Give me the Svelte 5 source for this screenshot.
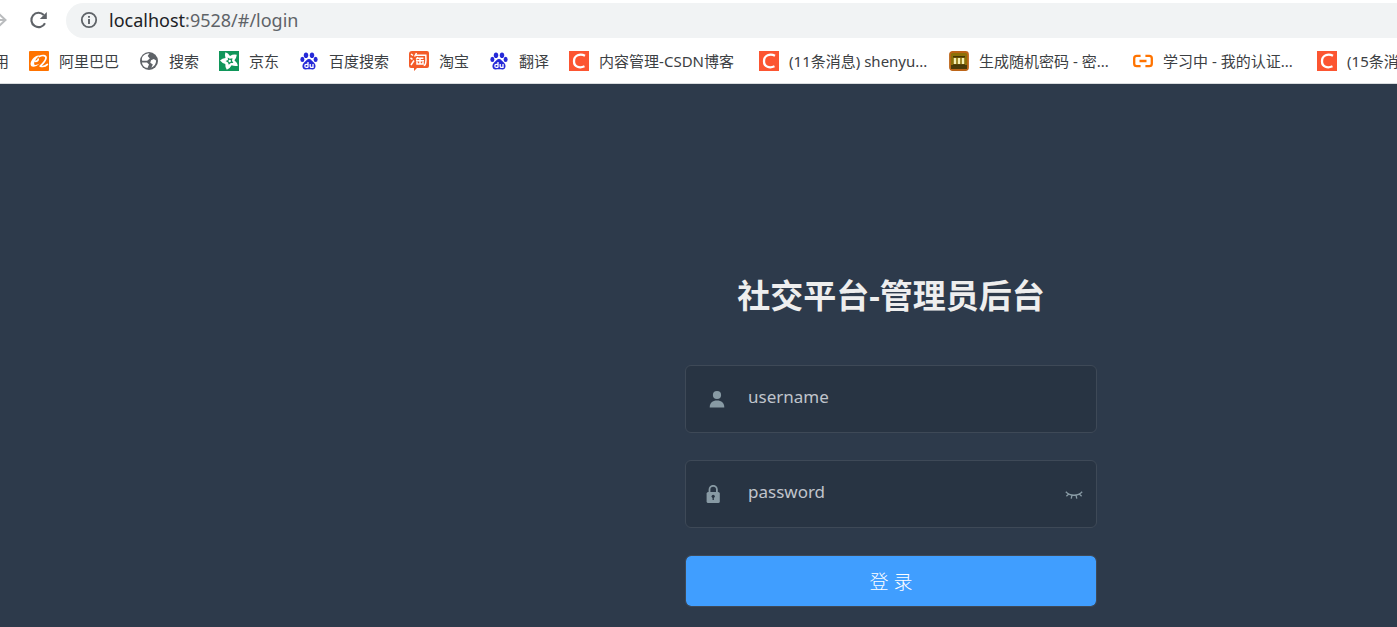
<script>
  const bookmarks = [
    { icon: 'ali', text: '阿里巴巴' },
    { icon: 'globe', text: '搜索' },
    { icon: 'jd', text: '京东' },
    { icon: 'paw', text: '百度搜索' },
    { icon: 'tao', text: '淘宝' },
    { icon: 'paw', text: '翻译' },
    { icon: 'csdn', text: '内容管理-CSDN博客', size: 'long' },
    { icon: 'csdn', text: '(11条消息) shenyu...', size: 'long' },
    { icon: 'key', text: '生成随机密码 - 密...', size: 'medium' },
    { icon: 'cloud', text: '学习中 - 我的认证...', size: 'medium' },
    { icon: 'csdn', text: '(15条消息)' }
  ];
  let address = 'localhost:9528/#/login';
  let username = '';
  let password = '';
  let visible = false;
</script>

<div class="browser">
  <header>
    <div class="toolbar">
      <button class="tool forward" aria-label="Forward">
        <svg viewBox="0 0 20 20"><path d="M1 10H16M9 4L15.5 10L9 16" fill="none" stroke="#babcbe" stroke-width="2" /></svg>
      </button>
      <button class="tool" aria-label="Reload">
        <svg viewBox="0 0 20 20"><path d="M17 13.2A7.2 7.2 0 1 1 15.8 5" fill="none" stroke="#5f6368" stroke-width="2.1" /><path d="M18.8 2V9H11.8Z" fill="#5f6368" /></svg>
      </button>
      <div class="address">
        <svg viewBox="0 0 18 18" aria-hidden="true"><circle cx="9" cy="9" r="7.2" fill="none" stroke="#5f6368" stroke-width="1.8" /><path d="M9 8V13M9 5V6.8" stroke="#5f6368" stroke-width="1.9" /></svg>
        <a href="#/login"><b>{address.slice(0, 9)}</b>{address.slice(9)}</a>
      </div>
    </div>
    <nav class="bookmarks" aria-label="Bookmarks">
      <a href="#apps" class="apps">应用</a>
      {#each bookmarks as item}
        <a href="#bookmark">
          <svg viewBox="0 0 20 20" aria-hidden="true">
            {#if item.icon === 'ali'}
              <rect width="20" height="20" rx="1" fill="#ff7300" />
              <path d="M10.6 4.6C6.5 3.2 1 9.5 1.6 13.6C2 17 7 16.4 11 12.2C8.6 13.8 5.4 14.8 5.2 13C5 11 7 7.2 10.6 4.6Z" fill="#fff" />
              <path d="M6 10.2C8 10.6 9.3 9.4 9.2 8M10.2 5.6C13.5 3.8 17.4 4.2 17 7.2C16.6 10 13.6 13 11.2 15.2C14.5 16 17 15 18.4 13.4" fill="none" stroke="#fff" stroke-width="1.7" stroke-linecap="round" stroke-linejoin="round" />
            {:else if item.icon === 'globe'}
              <circle cx="10" cy="10" r="9" fill="#5f6368" />
              <path d="M10.5 2.2L8.7 5L10.8 7.4L8.2 9.8H3.2C1.8 6 5.4 2.5 10.5 2.2ZM2.9 11.4H8L10 13.6L8.5 17C5.4 16.5 3.2 14.2 2.9 11.4ZM12 9.3L14.8 8L17.1 9.5C17.2 12.8 15.2 15.6 12.3 16.7L13.8 13.4L11.3 11.8Z" fill="#fff" />
            {:else if item.icon === 'jd'}
              <rect width="20" height="20" fill="#10965a" />
              <path d="M6.4 1.2Q9.2 2 11 5Q14 3 17.8 3.8Q17.5 7 15.4 9.3Q18.2 11.5 18.9 14.8Q15.5 15.5 12.6 14.3Q11 17.6 7.8 18.8Q6 16 6.3 12.9Q3 12.2 1 9.6Q3.2 7.3 6.5 6.9Q5.4 4 6.4 1.2Z" fill="#fff" />
              <path d="M8.7 6.5L10.8 7.8L13.5 7.2L13 9.7L14.4 12L11.8 12.1L9.8 13.8L9 11.4L6.6 10.1L9 9Z" fill="#10965a" />
              <circle cx="10.7" cy="10" r="1.2" fill="#fff" />
            {:else if item.icon === 'paw'}
              <g fill="#2529d8"><ellipse cx="7" cy="4.2" rx="2.2" ry="2.8" /><ellipse cx="13" cy="4.2" rx="2.2" ry="2.8" /><ellipse cx="3.4" cy="8.4" rx="2" ry="2.6" /><ellipse cx="16.6" cy="8.4" rx="2" ry="2.6" /><path d="M10 8C12.2 8 12.8 10 14.8 11.6C17.6 14 17 18.6 13.5 18.5C11.5 18.2 8.5 18.2 6.5 18.5C3 18.6 2.4 14 5.2 11.6C7.2 10 7.8 8 10 8Z" /></g>
              <path d="M9 11V16.4M9 13.3H7.2C5.4 13.4 5.4 16.4 7.2 16.4H9M11.2 13V15.2Q11.2 16.4 12.4 16.4H14V13" fill="none" stroke="#fff" stroke-width="1.3" />
            {:else if item.icon === 'tao'}
              <path d="M3 0H18Q20 0 20 2V15Q20 17 18 17H8L5 20V17H2Q0 17 0 15V3Q0 0 3 0Z" fill="#f35b28" />
              <path d="M2 3L4 4.5M1.5 7L3.5 8.3M2 14L5 9.5M7.5 2L5.6 5.5M7 4.2H16.8Q17.6 14.5 14.7 14.5M8.8 6.2L7.3 8.5M8.2 7.2H14.4M7 9.7H15M11 7.3V13M8 10.8V13H14V10.8" fill="none" stroke="#fff" stroke-width="1.5" />
            {:else if item.icon === 'csdn'}
              <rect width="20" height="20" fill="#fc5531" />
              <path d="M16 4.8C11 2.2 5 4.3 5 10.2C5 16.1 10.6 17.4 15.5 15.3" fill="none" stroke="#fff" stroke-width="2.3" />
            {:else if item.icon === 'key'}
              <rect x="1" y="1" width="18" height="18" rx="2.5" fill="#8c7008" stroke="#bd6518" stroke-width="1.8" />
              <path d="M2 14H18V18H2Z" fill="#4a3b08" />
              <path d="M4 5.8H16M4 14H16" stroke="#453706" stroke-width="1.4" /><path d="M6 7V13M10 7V13M14 7V13" stroke="#f6efb2" stroke-width="2.4" />
            {:else}
              <path d="M7.6 4.8H3.8Q1.2 4.8 1.2 7.2V12.8Q1.2 15.2 3.8 15.2H7.6M12.4 4.8H16.2Q18.8 4.8 18.8 7.2V12.8Q18.8 15.2 16.2 15.2H12.4M6.5 10H13.5" fill="none" stroke="#ff7300" stroke-width="2.3" />
            {/if}
          </svg>
          <span class={item.size}>{item.text}</span>
        </a>
      {/each}
    </nav>
  </header>

  <main>
    <form on:submit|preventDefault>
      <h1>社交平台-管理员后台</h1>
      <label class="field">
        <svg class="user" viewBox="0 0 18 18" aria-hidden="true"><circle cx="9" cy="5" r="4.1" fill="#889aa4" /><path d="M1.7 17.6C1.7 12.8 4.5 10.6 9 10.6S16.3 12.8 16.3 17.6Z" fill="#889aa4" /></svg>
        <input type="text" name="username" aria-label="username" placeholder="username" bind:value={username} />
      </label>
      <div class="field">
        <svg class="lock" viewBox="0 0 18 18" aria-hidden="true"><path d="M5.5 8V4.5A3.7 3.7 0 0 1 12.9 4.5V8" fill="none" stroke="#889aa4" stroke-width="1.8" /><rect x="2.6" y="7" width="13.2" height="11" rx="1.6" fill="#889aa4" /><circle cx="9.2" cy="11.3" r="1.6" fill="#283443" /><path d="M9.2 11V15" stroke="#283443" stroke-width="1.3" /></svg>
        <input type={visible ? 'text' : 'password'} name="password" aria-label="password" placeholder="password" bind:value={password} />
        <button class="eye" type="button" aria-label="Show password" on:click={() => (visible = !visible)}>
          <svg viewBox="0 0 18 18"><path d="M.8 6.8C5 11.4 13 11.4 17.2 6.8M3.7 9L1.4 11.2M7 10.2L6.2 13.6M11 10.2L11.8 13.6M14.3 9L16.6 11.2" fill="none" stroke="#889aa4" stroke-width="1.3" /></svg>
        </button>
      </div>
      <button class="login" type="submit">登 录</button>
    </form>
  </main>
</div>

<style>
  :global(body) { margin: 0; overflow: hidden; }
  .browser { display: flex; flex-direction: column; min-height: 100vh; overflow: hidden; background: #2d3a4b; font-family: "Noto Sans", "Noto Sans CJK SC", sans-serif; }
  * { box-sizing: border-box; }
  button { padding: 0; border: 0; background: none; cursor: pointer; }
  svg { display: block; flex: none; }
  a { color: inherit; text-decoration: none; }
  header { background: #fff; border-bottom: 1px solid #d9dcde; }
  .toolbar { display: flex; align-items: center; height: 38px; padding-top: 3px; }
  .tool { flex: none; width: 20px; height: 20px; margin: 0 18px 2px 0; }
  .tool svg { width: 20px; height: 20px; }
  .forward { margin-left: -10px; }
  .address { display: flex; flex: 1; align-items: center; gap: 11px; height: 35px; padding: 0 0 2px 14px; border-radius: 18px 0 0 18px; background: #f1f3f4; color: #5f6368; font-size: 18px; line-height: 24px; }
  .address svg { width: 18px; height: 18px; }
  .address b { color: #202124; font-weight: 400; }
  .bookmarks { display: flex; align-items: center; gap: 20px; height: 45px; padding-top: 1px; margin-left: -21px; color: #3c4043; font-size: 15px; line-height: 20px; white-space: nowrap; }
  .bookmarks a { display: flex; flex: none; align-items: center; gap: 10px; }
  .bookmarks svg { width: 20px; height: 20px; }
  .long { min-width: 140px; }
  .medium { min-width: 134px; }
  main { display: flex; flex: 1; justify-content: center; padding: 188px 0 20px 385px; }
  form { width: 412px; }
  h1 { margin: 0 0 45px; color: #eee; font-size: 33px; line-height: 48px; text-align: center; }
  .field { display: flex; align-items: center; height: 68px; margin-bottom: 27px; padding: 0 13px 0 18px; border: 1px solid #3e4957; border-radius: 6px; background: #283443; }
  .field > svg { width: 18px; height: 18px; }
  .user { margin: 0 22px 0 4px; }
  .lock { margin-right: 26px; }
  input { flex: 1; min-width: 0; height: 60px; padding: 0 0 6px; border: 0; outline: 0; background: none; color: #fff; font: inherit; font-size: 17px; }
  input::placeholder { color: #c0c4cc; opacity: 1; }
  .eye svg { width: 18px; height: 18px; }
  .login { display: block; width: 100%; height: 52px; border: 1px solid #3e4957; border-radius: 6px; background: #409eff; background-clip: padding-box; color: #fff; font-family: inherit; font-size: 19px; font-weight: 300; }
</style>
